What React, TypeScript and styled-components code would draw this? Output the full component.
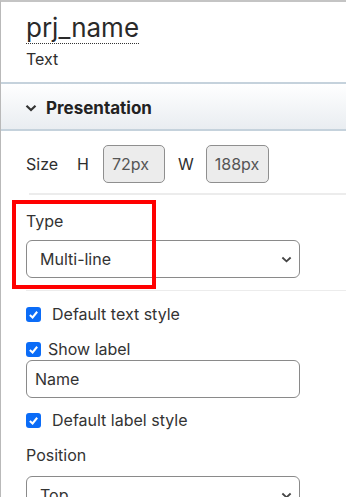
import React from "react";
import styled, { createGlobalStyle } from "styled-components";

const GlobalStyle = createGlobalStyle`
  html, body {
    margin: 0;
    padding: 0;
    background: #fff;
    overflow: hidden;
  }
  body {
    font-family: Inter, "Noto Sans", sans-serif;
    color: #2e2e2e;
  }
`;

const Panel = styled.div`
  width: 380px;
  height: 497px;
  overflow: hidden;
  border-left: 1px solid #b9b9b9;
  border-top: 2px solid #c4c4c4;
  box-sizing: border-box;
`;

const TitleBlock = styled.div`
  padding: 10px 0 0 25px;
  height: 80px;
  box-sizing: border-box;
`;

const Name = styled.span`
  font-size: 26px;
  line-height: 32px;
  color: #2a2a2a;
  border-bottom: 1px dotted #333;
`;

const Kind = styled.div`
  font-size: 16px;
  line-height: 22px;
  margin-top: 4px;
`;

const SectionHead = styled.div`
  display: flex;
  align-items: center;
  gap: 9px;
  height: 49px;
  box-sizing: border-box;
  padding: 2px 0 0 24px;
  border-top: 2px solid #c5d2dc;
  border-bottom: 2px solid #c5d2dc;
  background: linear-gradient(#ffffff, #e9edf1);
  font-size: 17px;
  font-weight: 700;
  color: #222;
`;

const Body = styled.div`
  position: relative;
  width: 274px;
  padding-left: 25px;
`;

const SizeRow = styled.div`
  display: flex;
  align-items: center;
  height: 62px;
  padding-top: 4px;
  box-sizing: border-box;
  font-size: 16px;
`;

const Divider = styled.div`
  height: 2px;
  background: #ececec;
  margin-left: 3px;
  margin-right: -60px;
`;

const SizeLabel = styled.span<{ $gap: number }>`
  margin-right: ${(p) => p.$gap}px;
`;

const SizeBox = styled.div<{ $w: number }>`
  width: ${(p) => p.$w}px;
  height: 38px;
  box-sizing: border-box;
  padding: 0 8px;
  display: flex;
  align-items: center;
  border: 1px solid #8f8f8f;
  border-radius: 5px;
  background: #ececec;
  color: #555;
  font-size: 16px;
  margin-right: 13px;
`;

const Field = styled.div`
  padding: 15px 0 12px;
  border-bottom: 1px solid #ececec;
  margin-right: -60px;
  padding-right: 60px;
`;

const FieldLabel = styled.div<{ $top?: number; $bottom: number }>`
  font-size: 16px;
  line-height: 22px;
  margin-top: ${(p) => p.$top ?? 0}px;
  margin-bottom: ${(p) => p.$bottom}px;
  color: #333;
`;

const Select = styled.div`
  display: flex;
  align-items: center;
  justify-content: space-between;
  height: 38px;
  box-sizing: border-box;
  border: 1px solid #8a8a8a;
  border-radius: 6px;
  padding: 0 7px 0 13px;
  font-size: 16px;
  color: #333;
`;

const Highlight = styled.div`
  position: absolute;
  left: 11px;
  top: 69px;
  width: 144px;
  height: 89px;
  border: 4px solid #ff0000;
  box-sizing: border-box;
  pointer-events: none;
`;

const CheckRow = styled.label<{ $gap: number; $top: number }>`
  display: flex;
  align-items: center;
  gap: ${(p) => p.$gap}px;
  margin-top: ${(p) => p.$top}px;
  font-size: 16px;
  line-height: 22px;
  color: #333;
`;

const Box = styled.span`
  width: 15px;
  height: 15px;
  border-radius: 3px;
  background: #0b6cf7;
  display: inline-flex;
  align-items: center;
  justify-content: center;
`;

const TextInput = styled.div`
  height: 38px;
  box-sizing: border-box;
  border: 1px solid #8a8a8a;
  border-radius: 6px;
  padding: 0 8px;
  display: flex;
  align-items: center;
  font-size: 16px;
  color: #333;
`;

const Chevron = ({ size = 12, color = "#333", width = 2.2 }) => (
  <svg width={size} height={size} viewBox="0 0 12 12">
    <path d="M1.5 3.8 L6 8 L10.5 3.8" fill="none" stroke={color} strokeWidth={width} />
  </svg>
);

const Check = () => (
  <svg width="11" height="11" viewBox="0 0 12 12">
    <path d="M2 6.5 L5 9.2 L10 3" fill="none" stroke="#fff" strokeWidth="2.2" />
  </svg>
);

export default function App() {
  return (
    <>
      <GlobalStyle />
      <Panel>
        <TitleBlock>
          <Name>prj_name</Name>
          <Kind>Text</Kind>
        </TitleBlock>
        <SectionHead>
          <Chevron />
          Presentation
        </SectionHead>
        <Body>
          <SizeRow>
            <SizeLabel $gap={19}>Size</SizeLabel>
            <SizeLabel $gap={14}>H</SizeLabel>
            <SizeBox $w={62}>72px</SizeBox>
            <SizeLabel $gap={12}>W</SizeLabel>
            <SizeBox $w={63}>188px</SizeBox>
          </SizeRow>
          <Divider />
          <Highlight />
          <Field>
            <FieldLabel $bottom={8}>Type</FieldLabel>
            <Select>
              Multi-line
              <Chevron size={11} color="#444" width={2} />
            </Select>
          </Field>
          <CheckRow $gap={11} $top={12}>
            <Box>
              <Check />
            </Box>
            Default text style
          </CheckRow>
          <CheckRow $gap={7} $top={13}>
            <Box>
              <Check />
            </Box>
            Show label
          </CheckRow>
          <TextInput>Name</TextInput>
          <CheckRow $gap={11} $top={11}>
            <Box>
              <Check />
            </Box>
            Default label style
          </CheckRow>
          <FieldLabel $top={13} $bottom={10}>
            Position
          </FieldLabel>
          <Select>
            Top
            <Chevron size={11} color="#444" width={2} />
          </Select>
        </Body>
      </Panel>
    </>
  );
}
